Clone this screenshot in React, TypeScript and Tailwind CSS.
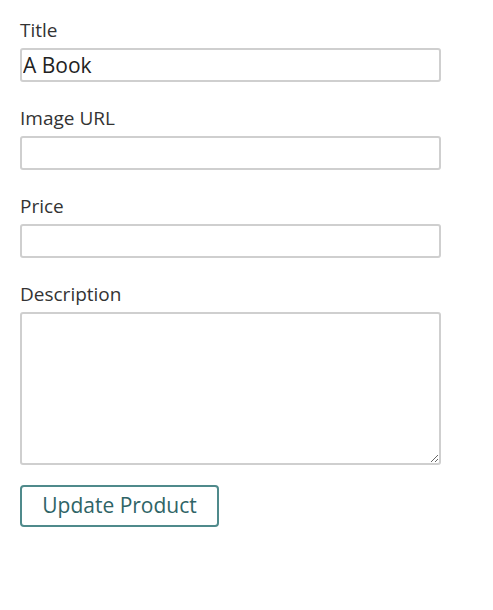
import React from "react";

const fields = [
  { label: "Title", value: "A Book" },
  { label: "Image URL", value: "" },
  { label: "Price", value: "" },
];

export default function App() {
  return (
    <div className="min-h-screen bg-white px-[20px] pt-[16px] font-['Open_Sans',sans-serif] text-[#333]">
      <form className="w-[421px]" onSubmit={(e) => e.preventDefault()}>
        {fields.map((f) => (
          <div key={f.label} className="mb-[22px]">
            <label className="mb-[4px] block text-[19px] leading-[28px]">
              {f.label}
            </label>
            <input
              type="text"
              defaultValue={f.value}
              className="block h-[34px] w-full rounded-[3px] border-2 border-[#cfcfcf] bg-white px-[1px] text-[21px] text-[#222] outline-none"
            />
          </div>
        ))}

        {/* Description */}
        <div className="mb-[20px]">
          <label className="mb-[4px] block text-[19px] leading-[28px]">
            Description
          </label>
          <textarea className="block h-[153px] w-full rounded-[3px] border-2 border-[#cfcfcf] bg-white px-[1px] text-[18px] outline-none" />
        </div>

        <button
          type="submit"
          className="h-[42px] w-[199px] rounded-[4px] border-2 border-[#4f8a8b] bg-white text-[21px] text-[#2f6466]"
        >
          Update Product
        </button>
      </form>
    </div>
  );
}
